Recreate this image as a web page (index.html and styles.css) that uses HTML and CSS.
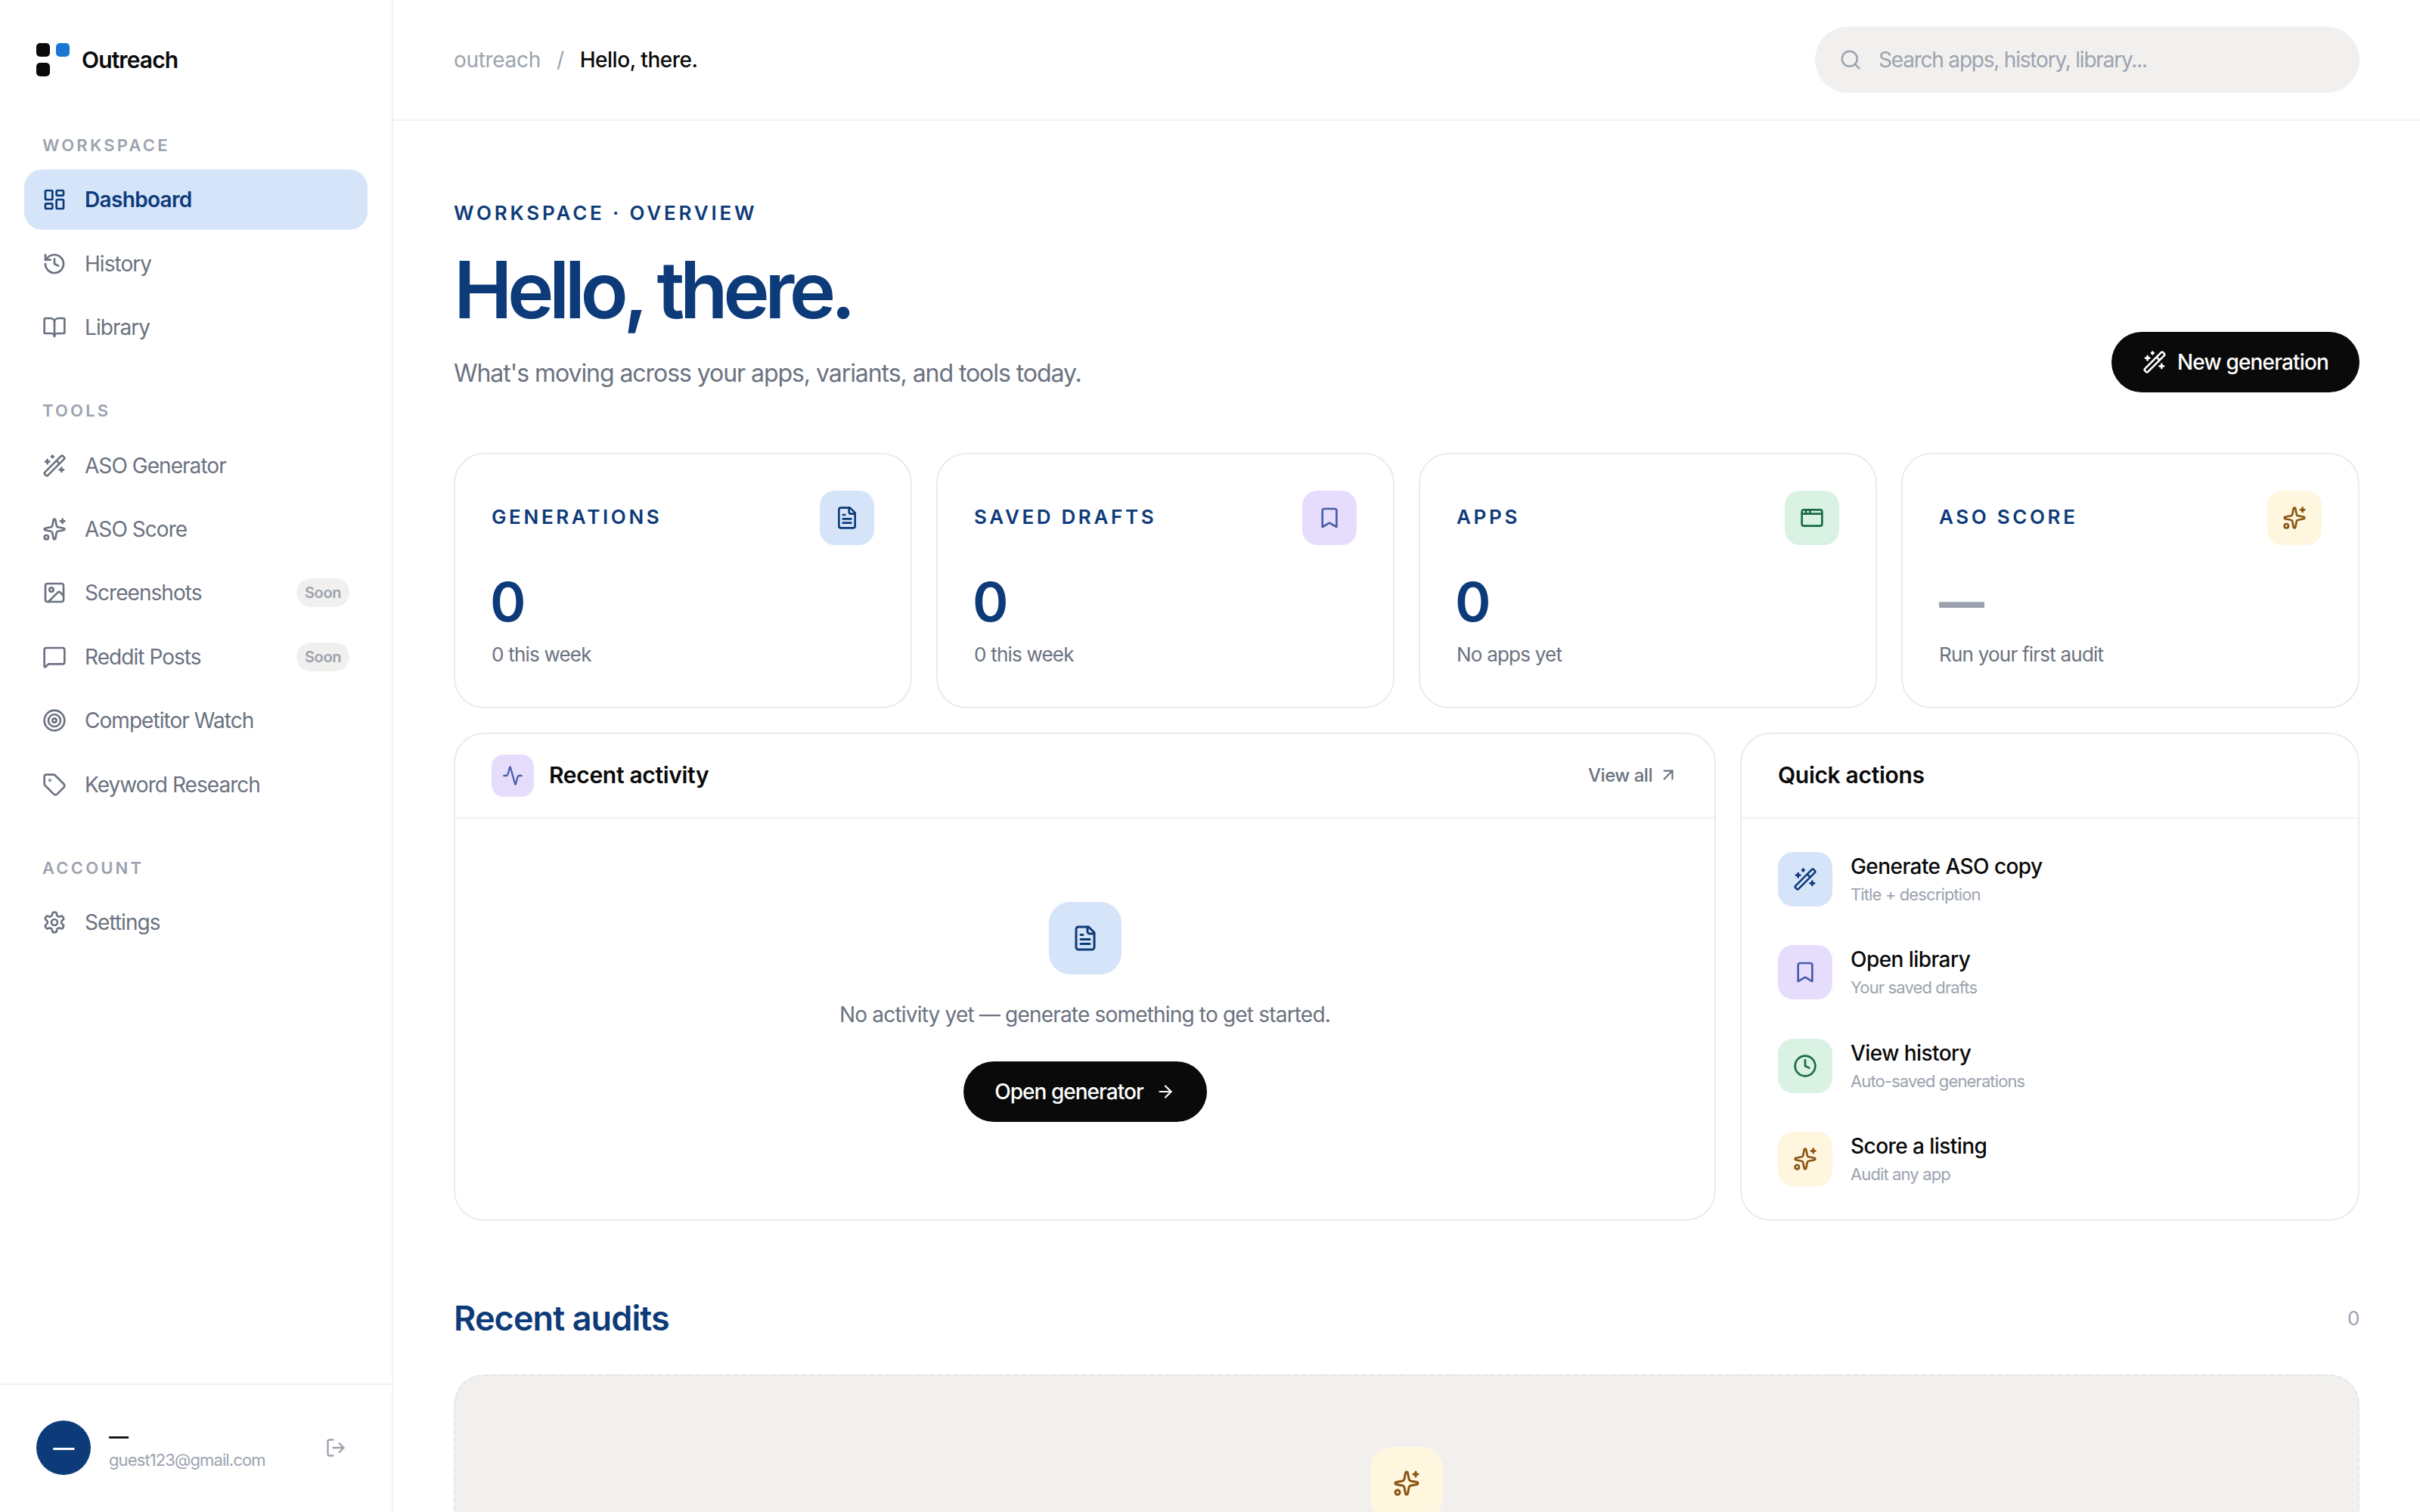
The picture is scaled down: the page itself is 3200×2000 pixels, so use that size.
FILE: index.html
```html
<!DOCTYPE html>
<html lang="en">
<head>
<meta charset="utf-8">
<title>Outreach</title>
<link rel="stylesheet" href="styles.css">
</head>
<body>
<svg class="defs" aria-hidden="true">
  <symbol id="i-dashboard" viewBox="0 0 24 24"><rect x="3" y="3" width="7" height="9" rx="1"/><rect x="14" y="3" width="7" height="5" rx="1"/><rect x="14" y="12" width="7" height="9" rx="1"/><rect x="3" y="16" width="7" height="5" rx="1"/></symbol>
  <symbol id="i-history" viewBox="0 0 24 24"><path d="M3 12a9 9 0 1 0 9-9 9.75 9.75 0 0 0-6.74 2.74L3 8"/><path d="M3 3v5h5"/><path d="M12 7v5l4 2"/></symbol>
  <symbol id="i-book" viewBox="0 0 24 24"><path d="M12 7v14"/><path d="M3 18a1 1 0 0 1-1-1V4a1 1 0 0 1 1-1h5a4 4 0 0 1 4 4 4 4 0 0 1 4-4h5a1 1 0 0 1 1 1v13a1 1 0 0 1-1 1h-6a3 3 0 0 0-3 3 3 3 0 0 0-3-3z"/></symbol>
  <symbol id="i-wand" viewBox="0 0 24 24"><path d="m21.64 3.64-1.28-1.28a1.21 1.21 0 0 0-1.72 0L2.36 18.64a1.21 1.21 0 0 0 0 1.72l1.28 1.28a1.2 1.2 0 0 0 1.72 0L21.64 5.36a1.2 1.2 0 0 0 0-1.72"/><path d="m14 7 3 3"/><path d="M5 6v4"/><path d="M19 14v4"/><path d="M10 2v2"/><path d="M7 8H3"/><path d="M21 16h-4"/><path d="M11 3H9"/></symbol>
  <symbol id="i-sparkles" viewBox="0 0 24 24"><path d="M11.017 2.814a1 1 0 0 1 1.966 0l1.051 5.558a2 2 0 0 0 1.594 1.594l5.558 1.051a1 1 0 0 1 0 1.966l-5.558 1.051a2 2 0 0 0-1.594 1.594l-1.051 5.558a1 1 0 0 1-1.966 0l-1.051-5.558a2 2 0 0 0-1.594-1.594l-5.558-1.051a1 1 0 0 1 0-1.966l5.558-1.051a2 2 0 0 0 1.594-1.594z"/><path d="M20 2v4"/><path d="M22 4h-4"/><circle cx="4" cy="20" r="2"/></symbol>
  <symbol id="i-image" viewBox="0 0 24 24"><rect x="3" y="3" width="18" height="18" rx="2"/><circle cx="9" cy="9" r="2"/><path d="m21 15-3.086-3.086a2 2 0 0 0-2.828 0L6 21"/></symbol>
  <symbol id="i-message" viewBox="0 0 24 24"><path d="M22 17a2 2 0 0 1-2 2H6.828a2 2 0 0 0-1.414.586l-2.202 2.202A.71.71 0 0 1 2 21.286V5a2 2 0 0 1 2-2h16a2 2 0 0 1 2 2z"/></symbol>
  <symbol id="i-target" viewBox="0 0 24 24"><circle cx="12" cy="12" r="10"/><circle cx="12" cy="12" r="6"/><circle cx="12" cy="12" r="2"/></symbol>
  <symbol id="i-tag" viewBox="0 0 24 24"><path d="M12.586 2.586A2 2 0 0 0 11.172 2H4a2 2 0 0 0-2 2v7.172a2 2 0 0 0 .586 1.414l8.704 8.704a2.426 2.426 0 0 0 3.42 0l6.58-6.58a2.426 2.426 0 0 0 0-3.42z"/><circle cx="7.5" cy="7.5" r=".5"/></symbol>
  <symbol id="i-settings" viewBox="0 0 24 24"><path d="M12.22 2h-.44a2 2 0 0 0-2 2v.18a2 2 0 0 1-1 1.73l-.43.25a2 2 0 0 1-2 0l-.15-.08a2 2 0 0 0-2.73.73l-.22.38a2 2 0 0 0 .73 2.73l.15.1a2 2 0 0 1 1 1.72v.51a2 2 0 0 1-1 1.74l-.15.09a2 2 0 0 0-.73 2.73l.22.38a2 2 0 0 0 2.73.73l.15-.08a2 2 0 0 1 2 0l.43.25a2 2 0 0 1 1 1.73V20a2 2 0 0 0 2 2h.44a2 2 0 0 0 2-2v-.18a2 2 0 0 1 1-1.73l.43-.25a2 2 0 0 1 2 0l.15.08a2 2 0 0 0 2.73-.73l.22-.39a2 2 0 0 0-.73-2.73l-.15-.08a2 2 0 0 1-1-1.74v-.5a2 2 0 0 1 1-1.74l.15-.09a2 2 0 0 0 .73-2.73l-.22-.38a2 2 0 0 0-2.73-.73l-.15.08a2 2 0 0 1-2 0l-.43-.25a2 2 0 0 1-1-1.73V4a2 2 0 0 0-2-2z"/><circle cx="12" cy="12" r="3"/></symbol>
  <symbol id="i-logout" viewBox="0 0 24 24"><path d="M9 21H5a2 2 0 0 1-2-2V5a2 2 0 0 1 2-2h4"/><path d="m16 17 5-5-5-5"/><path d="M21 12H9"/></symbol>
  <symbol id="i-search" viewBox="0 0 24 24"><path d="m21 21-4.34-4.34"/><circle cx="11" cy="11" r="8"/></symbol>
  <symbol id="i-file" viewBox="0 0 24 24"><path d="M15 2H6a2 2 0 0 0-2 2v16a2 2 0 0 0 2 2h12a2 2 0 0 0 2-2V7Z"/><path d="M14 2v4a2 2 0 0 0 2 2h4"/><path d="M10 9H8"/><path d="M16 13H8"/><path d="M16 17H8"/></symbol>
  <symbol id="i-bookmark" viewBox="0 0 24 24"><path d="m19 21-7-4-7 4V5a2 2 0 0 1 2-2h10a2 2 0 0 1 2 2v16z"/></symbol>
  <symbol id="i-window" viewBox="0 0 24 24"><rect x="2" y="4" width="20" height="16" rx="2"/><path d="M10 4v4"/><path d="M2 8h20"/><path d="M6 4v4"/></symbol>
  <symbol id="i-activity" viewBox="0 0 24 24"><path d="M22 12h-2.48a2 2 0 0 0-1.93 1.46l-2.35 8.36a.25.25 0 0 1-.48 0L9.24 2.18a.25.25 0 0 0-.48 0l-2.35 8.36A2 2 0 0 1 4.49 12H2"/></symbol>
  <symbol id="i-clock" viewBox="0 0 24 24"><circle cx="12" cy="12" r="10"/><path d="M12 6v6l4 2"/></symbol>
  <symbol id="i-up-right" viewBox="0 0 24 24"><path d="M7 7h10v10"/><path d="M7 17 17 7"/></symbol>
  <symbol id="i-right" viewBox="0 0 24 24"><path d="M5 12h14"/><path d="m12 5 7 7-7 7"/></symbol>
</svg>

<div class="app">
  <aside class="sidebar">
    <div class="brand">
      <div class="logo"><span></span><span class="logo-blue"></span><span></span></div>
      <span class="brand-name">Outreach</span>
    </div>
    <nav class="nav">
      <div class="nav-section">
        <div class="nav-label">WORKSPACE</div>
        <a class="nav-item active"><svg class="icon"><use href="#i-dashboard"/></svg><span>Dashboard</span></a>
        <a class="nav-item"><svg class="icon"><use href="#i-history"/></svg><span>History</span></a>
        <a class="nav-item"><svg class="icon"><use href="#i-book"/></svg><span>Library</span></a>
      </div>
      <div class="nav-section">
        <div class="nav-label">TOOLS</div>
        <a class="nav-item"><svg class="icon"><use href="#i-wand"/></svg><span>ASO Generator</span></a>
        <a class="nav-item"><svg class="icon"><use href="#i-sparkles"/></svg><span>ASO Score</span></a>
        <a class="nav-item"><svg class="icon"><use href="#i-image"/></svg><span>Screenshots</span><em class="soon">Soon</em></a>
        <a class="nav-item"><svg class="icon"><use href="#i-message"/></svg><span>Reddit Posts</span><em class="soon">Soon</em></a>
        <a class="nav-item"><svg class="icon"><use href="#i-target"/></svg><span>Competitor Watch</span></a>
        <a class="nav-item"><svg class="icon"><use href="#i-tag"/></svg><span>Keyword Research</span></a>
      </div>
      <div class="nav-section">
        <div class="nav-label">ACCOUNT</div>
        <a class="nav-item"><svg class="icon"><use href="#i-settings"/></svg><span>Settings</span></a>
      </div>
    </nav>
    <div class="user">
      <div class="avatar">—</div>
      <div class="user-info">
        <div class="user-name">—</div>
        <div class="user-email">guest123@gmail.com</div>
      </div>
      <svg class="icon logout"><use href="#i-logout"/></svg>
    </div>
  </aside>

  <main class="main">
    <header class="topbar">
      <div class="crumbs"><span class="crumb-root">outreach</span><span class="crumb-sep">/</span><span class="crumb-cur">Hello, there.</span></div>
      <div class="search"><svg class="icon search-icon"><use href="#i-search"/></svg><span>Search apps, history, library...</span></div>
    </header>

    <div class="content">
      <section class="hero">
        <div>
          <div class="eyebrow">WORKSPACE · OVERVIEW</div>
          <h1 class="title">Hello, there.</h1>
          <p class="subtitle">What's moving across your apps, variants, and tools today.</p>
        </div>
        <button class="btn btn-new"><svg class="icon"><use href="#i-wand"/></svg>New generation</button>
      </section>

      <section class="stats">
        <div class="card stat">
          <div class="stat-head"><span class="stat-label">GENERATIONS</span><span class="chip chip-blue"><svg class="icon"><use href="#i-file"/></svg></span></div>
          <div class="stat-value">0</div>
          <div class="stat-sub">0 this week</div>
        </div>
        <div class="card stat">
          <div class="stat-head"><span class="stat-label">SAVED DRAFTS</span><span class="chip chip-purple"><svg class="icon"><use href="#i-bookmark"/></svg></span></div>
          <div class="stat-value">0</div>
          <div class="stat-sub">0 this week</div>
        </div>
        <div class="card stat">
          <div class="stat-head"><span class="stat-label">APPS</span><span class="chip chip-green"><svg class="icon"><use href="#i-window"/></svg></span></div>
          <div class="stat-value">0</div>
          <div class="stat-sub">No apps yet</div>
        </div>
        <div class="card stat">
          <div class="stat-head"><span class="stat-label">ASO SCORE</span><span class="chip chip-amber"><svg class="icon"><use href="#i-sparkles"/></svg></span></div>
          <div class="stat-value stat-empty">—</div>
          <div class="stat-sub">Run your first audit</div>
        </div>
      </section>

      <section class="panels">
        <div class="card panel">
          <div class="panel-head">
            <span class="chip chip-purple chip-sm"><svg class="icon"><use href="#i-activity"/></svg></span>
            <span class="panel-title">Recent activity</span>
            <a class="view-all">View all<svg class="icon"><use href="#i-up-right"/></svg></a>
          </div>
          <div class="empty">
            <span class="chip chip-blue chip-lg"><svg class="icon"><use href="#i-file"/></svg></span>
            <p class="empty-text">No activity yet — generate something to get started.</p>
            <button class="btn btn-open">Open generator<svg class="icon"><use href="#i-right"/></svg></button>
          </div>
        </div>
        <div class="card panel">
          <div class="panel-head"><span class="panel-title">Quick actions</span></div>
          <div class="actions">
            <a class="action"><span class="chip chip-blue"><svg class="icon"><use href="#i-wand"/></svg></span><span class="action-text"><b>Generate ASO copy</b><small>Title + description</small></span></a>
            <a class="action"><span class="chip chip-purple"><svg class="icon"><use href="#i-bookmark"/></svg></span><span class="action-text"><b>Open library</b><small>Your saved drafts</small></span></a>
            <a class="action"><span class="chip chip-green"><svg class="icon"><use href="#i-clock"/></svg></span><span class="action-text"><b>View history</b><small>Auto-saved generations</small></span></a>
            <a class="action"><span class="chip chip-amber"><svg class="icon"><use href="#i-sparkles"/></svg></span><span class="action-text"><b>Score a listing</b><small>Audit any app</small></span></a>
          </div>
        </div>
      </section>

      <section class="audits">
        <div class="audits-head"><h2 class="audits-title">Recent audits</h2><span class="audits-count">0</span></div>
        <div class="audits-box"><span class="chip chip-amber chip-lg"><svg class="icon"><use href="#i-sparkles"/></svg></span></div>
      </section>
    </div>
  </main>
</div>
</body>
</html>
```

FILE: styles.css
```css
* { box-sizing: border-box; }
html, body { margin: 0; height: 100%; }
body {
  font-family: Inter, "Liberation Sans", sans-serif;
  background: #fff;
  color: #0a0a0a;
  overflow: hidden;
  letter-spacing: -0.02em;
}
.defs { display: none; }
.icon {
  width: 32px; height: 32px; flex: none;
  fill: none; stroke: currentColor; stroke-width: 2;
  stroke-linecap: round; stroke-linejoin: round;
}
.app { display: flex; height: 2000px; overflow: hidden; }

/* sidebar */
.sidebar {
  width: 520px; flex: none; display: flex; flex-direction: column;
  border-right: 2px solid #f1f1f1;
}
.brand { height: 158px; flex: none; display: flex; align-items: center; padding-left: 48px; gap: 16px; }
.logo { width: 44px; height: 44px; display: grid; grid-template-columns: 18px 18px; gap: 8px; }
.logo span { background: #0a0a0a; border-radius: 5px; }
.logo .logo-blue { background: #1976d2; }
.brand-name { font-size: 30px; font-weight: 600; letter-spacing: -0.03em; }
.nav { flex: 1; padding: 18px 32px 0; display: flex; flex-direction: column; gap: 54px; }
.nav-section { display: flex; flex-direction: column; gap: 4.4px; }
.nav-label {
  height: 32px; line-height: 32px; margin-bottom: 12px; padding-left: 24px;
  font-size: 22px; font-weight: 600; letter-spacing: 0.145em; color: #9ca3af;
}
.nav-item {
  height: 80px; display: flex; align-items: center; gap: 24px; padding: 0 24px;
  border-radius: 24px; font-size: 28px; color: #6b7280; letter-spacing: -0.034em;
}
.nav-item span { flex: 1; }
.nav-item.active { background: #d6e4fa; color: #0d3b7a; font-weight: 600; letter-spacing: -0.024em; }
.soon {
  width: 70px; height: 38px; border-radius: 19px; background: #f1f0ee; color: #9ca3af;
  font-size: 20px; font-weight: 600; font-style: normal; text-align: center; line-height: 38px;
  letter-spacing: -0.02em;
}
.user {
  height: 170px; flex: none; display: flex; align-items: center; gap: 24px;
  padding: 0 60px 2px 48px; border-top: 2px solid #f1f1f1;
}
.avatar {
  width: 72px; height: 72px; flex: none; border-radius: 50%; background: #0d3b7a; color: #fff;
  font-size: 28px; font-weight: 600; display: flex; align-items: center; justify-content: center;
}
.user-info { flex: 1; min-width: 0; }
.user-name { font-size: 26px; font-weight: 600; line-height: 32px; }
.user-email { font-size: 22px; line-height: 30px; color: #9ca3af; letter-spacing: -0.04em; }
.logout { width: 28px; height: 28px; color: #9ca3af; }

/* main */
.main { flex: 1; min-width: 0; display: flex; flex-direction: column; }
.topbar {
  height: 160px; flex: none; display: flex; align-items: center; justify-content: space-between;
  padding: 0 80px; border-bottom: 2px solid #f1f1f1;
}
.crumbs { display: flex; align-items: center; gap: 21px; font-size: 28px; }
.crumb-root { color: #9ca3af; }
.crumb-sep { color: #9ca3af; }
.crumb-cur { font-weight: 500; letter-spacing: -0.017em; }
.search {
  width: 720px; height: 88px; border-radius: 44px; background: #f1f0ee; color: #9ca3af;
  display: flex; align-items: center; gap: 22px; padding: 0 32px; font-size: 28px;
  letter-spacing: -0.043em;
}
.search-icon { width: 30px; height: 30px; }

.content { padding: 104px 80px 0; }
.hero { display: flex; justify-content: space-between; align-items: flex-end; }
.eyebrow { font-size: 26px; line-height: 36px; font-weight: 600; letter-spacing: 0.146em; color: #0d3b7a; }
.title {
  margin: 27px 0 0; font-size: 104px; line-height: 112px; font-weight: 600;
  letter-spacing: -0.0625em; color: #0d3b7a;
}
.subtitle { margin: 31px 0 1px; font-size: 32px; line-height: 48px; color: #6b7280; letter-spacing: -0.033em; }
.btn {
  height: 80px; border: 0; border-radius: 40px; background: #0a0a0a; color: #fff;
  font-family: inherit; font-size: 28px; font-weight: 500; letter-spacing: -0.03em;
  display: flex; align-items: center; justify-content: center;
}
.btn-new { width: 328px; gap: 14px; }
.btn-open { width: 322px; gap: 16px; letter-spacing: -0.035em; }
.btn-open .icon { width: 26px; height: 26px; }

.card { background: #fff; border: 2px solid #ebebeb; border-radius: 40px; }
.stats { margin-top: 80px; display: grid; grid-template-columns: repeat(4, 1fr); gap: 32px; }
.stat { padding: 48px 48px 50px; height: 338px; }
.stat-head { display: flex; justify-content: space-between; align-items: center; }
.stat-label { font-size: 26px; font-weight: 600; letter-spacing: 0.14em; color: #0d3b7a; margin-bottom: 4px; }
.chip {
  width: 72px; height: 72px; flex: none; border-radius: 20px;
  display: flex; align-items: center; justify-content: center;
}
.chip-sm { width: 56px; height: 56px; border-radius: 16px; }
.chip-sm .icon { width: 28px; height: 28px; }
.chip-lg { width: 96px; height: 96px; border-radius: 28px; }
.chip-lg .icon { width: 36px; height: 36px; }
.chip-blue { background: #d6e4fa; color: #0d3b7a; }
.chip-purple { background: #e6ddfd; color: #4a5ea8; }
.chip-green { background: #d9f2e3; color: #1a6b45; }
.chip-amber { background: #fff6e0; color: #8a5510; }
.stat-value { margin: 35px 0 0 -2px; font-size: 72px; line-height: 80px; font-weight: 600; color: #0d3b7a; }
.stat-empty { color: #9ca3af; font-size: 60px; font-weight: 800; margin-left: 0; }
.stat-sub { margin-top: 10px; font-size: 26px; line-height: 40px; color: #6b7280; letter-spacing: -0.03em; }

.panels { margin-top: 32px; display: grid; grid-template-columns: 1669fr 819fr; gap: 32px; }
.panel { display: flex; flex-direction: column; height: 646px; }
.panel-head {
  height: 112px; flex: none; display: flex; align-items: center; gap: 20px;
  padding: 0 48px; border-bottom: 2px solid #f1f1f1;
}
.panel-title { font-size: 30px; font-weight: 600; flex: 1; margin-bottom: 3px; }
.view-all { display: flex; align-items: center; gap: 8px; font-size: 24px; font-weight: 500; color: #6b7280; letter-spacing: -0.02em; margin-bottom: 2px; }
.view-all .icon { width: 26px; height: 26px; }
.empty { flex: 1; display: flex; flex-direction: column; align-items: center; padding-top: 110px; }
.empty-text { margin: 33px 0 42px; font-size: 28px; line-height: 40px; color: #6b7280; letter-spacing: -0.029em; }
.actions { flex: 1; display: flex; flex-direction: column; justify-content: space-between; padding: 44px 48px; }
.action { display: flex; align-items: center; gap: 24px; }
.action-text { display: flex; flex-direction: column; gap: 4px; }
.action-text b { font-size: 28px; line-height: 36px; font-weight: 500; letter-spacing: -0.02em; }
.action-text small { font-size: 22px; line-height: 30px; color: #9ca3af; letter-spacing: -0.04em; }

.audits { margin-top: 100px; }
.audits-head { display: flex; justify-content: space-between; align-items: center; height: 56px; }
.audits-title { margin: 0; font-size: 45px; font-weight: 600; color: #0d3b7a; letter-spacing: -0.02em; }
.audits-count { font-size: 26px; color: #9ca3af; }
.audits-box {
  margin-top: 47px; height: 400px; padding-top: 94px; border: 2px dashed #e5e5e3; border-radius: 40px;
  background: #f1f0ee; display: flex; justify-content: center; align-items: flex-start;
}
```
